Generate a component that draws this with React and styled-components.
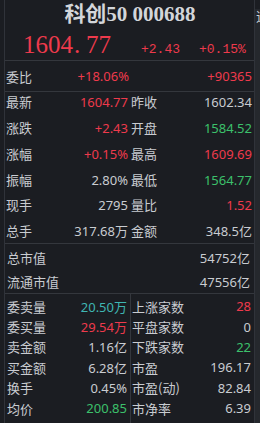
import styled, { createGlobalStyle } from 'styled-components'

const GlobalStyle = createGlobalStyle`
  body {
    margin: 0;
    background: #1b1d22;
    font-family: "Noto Sans", "Noto Sans CJK SC", sans-serif;
  }
`

const RED = '#ee3a4c'
const GREEN = '#3cc06b'
const TEAL = '#3fb6b2'
const TEXT = '#c9ccd1'

const colorOf = (tone) =>
  tone === 'up' ? RED : tone === 'down' ? GREEN : tone === 'teal' ? TEAL : TEXT

const quote = {
  ratio: { label: '委比', pct: '+18.06%', diff: '+90365' },
  rows: [
    ['最新', '1604.77', 'up', '昨收', '1602.34', ''],
    ['涨跌', '+2.43', 'up', '开盘', '1584.52', 'down'],
    ['涨幅', '+0.15%', 'up', '最高', '1609.69', 'up'],
    ['振幅', '2.80%', '', '最低', '1564.77', 'down'],
    ['现手', '2795', '', '量比', '1.52', 'up'],
    ['总手', '317.68万', '', '金额', '348.5亿', ''],
  ],
  caps: [
    ['总市值', '54752亿'],
    ['流通市值', '47556亿'],
  ],
  left: [
    ['委卖量', '20.50万', 'teal'],
    ['委买量', '29.54万', 'up'],
    ['卖金额', '1.16亿', ''],
    ['买金额', '6.28亿', ''],
    ['换手', '0.45%', ''],
    ['均价', '200.85', 'down'],
    ['内盘', '', ''],
  ],
  right: [
    ['上涨家数', '28', 'up'],
    ['平盘家数', '0', ''],
    ['下跌家数', '22', 'down'],
    ['市盈', '196.17', ''],
    ['市盈(动)', '82.84', ''],
    ['市净率', '6.39', ''],
    ['', '', ''],
  ],
}

const App = () => {
  return (
    <>
      <GlobalStyle />
      <Frame>
        <Panel>
          <Header>
            <Title>科创50 000688</Title>
            <PriceRow>
              <BigPrice>
                1604<Dot>.</Dot>77
              </BigPrice>
              <Change>+2.43</Change>
              <Change>+0.15%</Change>
            </PriceRow>
          </Header>

          <RatioRow>
            <Label>{quote.ratio.label}</Label>
            <RatioPct>{quote.ratio.pct}</RatioPct>
            <Value $tone="up">{quote.ratio.diff}</Value>
          </RatioRow>

          <QuoteGrid>
            {quote.rows.map(([l1, v1, t1, l2, v2, t2]) => (
              <QuoteRow key={l1}>
                <Half>
                  <Label>{l1}</Label>
                  <Value $tone={t1}>{v1}</Value>
                </Half>
                <Half>
                  <Label>{l2}</Label>
                  <Value $tone={t2}>{v2}</Value>
                </Half>
              </QuoteRow>
            ))}
          </QuoteGrid>

          <CapSection>
            {quote.caps.map(([l, v]) => (
              <CapRow key={l}>
                <Label>{l}</Label>
                <Value>{v}</Value>
              </CapRow>
            ))}
          </CapSection>

          <Split>
            <Column $left>
              {quote.left.map(([l, v, t]) => (
                <SmallRow key={l}>
                  <Label>{l}</Label>
                  <Value $tone={t}>{v}</Value>
                </SmallRow>
              ))}
            </Column>
            <Column>
              {quote.right.map(([l, v, t], i) => (
                <SmallRow key={i}>
                  <Label>{l}</Label>
                  <Value $tone={t}>{v}</Value>
                </SmallRow>
              ))}
            </Column>
          </Split>
        </Panel>
        <SideStrip>
          <span>道</span>
        </SideStrip>
      </Frame>
    </>
  )
}

const Frame = styled.div`
  display: flex;
  align-items: flex-start;
  width: 260px;
  height: 423px;
  overflow: hidden;
  background: #1b1d22;
`

const Panel = styled.div`
  margin-left: 4px;
  width: 249px;
  min-height: 423px;
  flex-shrink: 0;
  border-left: 1px solid #30333a;
  border-right: 1px solid #30333a;
`

const SideStrip = styled.div`
  flex: 1;
  align-self: stretch;
  margin-top: 9px;
  background: #25282d;
  overflow: hidden;
  span {
    display: block;
    padding-left: 1px;
    font-size: 13px;
    line-height: 13px;
    color: #d0d3d8;
    font-family: "Noto Sans CJK SC", sans-serif;
  }
`

const Header = styled.div`
  height: 60px;
  border-bottom: 1px solid #34373d;
`

const Title = styled.div`
  height: 28px;
  line-height: 28px;
  text-align: center;
  font-family: "Liberation Serif", "Noto Sans CJK SC", serif;
  font-weight: 700;
  font-size: 21px;
  color: #d3d6da;
  padding-left: 1px;
`

const PriceRow = styled.div`
  display: flex;
  align-items: baseline;
  padding-left: 18px;
  margin-top: 4px;
`

const BigPrice = styled.span`
  width: 118px;
  font-family: "Liberation Serif", serif;
  font-size: 25px;
  color: ${RED};
  line-height: 26px;
`

const Dot = styled.span`
  display: inline-block;
  width: 13px;
  padding-left: 1px;
  box-sizing: border-box;
`

const Change = styled.span`
  font-family: "Liberation Mono", monospace;
  font-size: 13px;
  color: ${RED};
  & + & {
    margin-left: 19px;
  }
`

const Label = styled.span`
  font-family: "Noto Sans CJK SC", sans-serif;
  font-size: 13px;
  color: ${TEXT};
  white-space: nowrap;
`

const Value = styled.span`
  margin-left: auto;
  font-size: 13px;
  color: ${({ $tone }) => colorOf($tone)};
  white-space: nowrap;
`

const RatioRow = styled.div`
  height: 30px;
  display: flex;
  align-items: center;
  padding: 0 2px 0 1px;
  border-bottom: 1px solid #34373d;
`

const RatioPct = styled.span`
  width: 97px;
  flex-shrink: 0;
  margin-right: auto;
  text-align: right;
  font-size: 13px;
  color: ${RED};
`

const QuoteGrid = styled.div`
  height: 151px;
  display: grid;
  grid-template-rows: repeat(6, 25.85px);
  border-bottom: 1px solid #34373d;
`

const QuoteRow = styled.div`
  display: grid;
  grid-template-columns: 125px 1fr;
  align-items: start;
  line-height: 20px;
`

const Half = styled.div`
  display: flex;
  padding: 0 2px 0 1px;
`

const CapSection = styled.div`
  height: 48px;
  padding-top: 1px;
  border-bottom: 1px solid #34373d;
`

const CapRow = styled.div`
  height: 24.5px;
  display: flex;
  align-items: center;
  padding: 0 4px 0 2px;
`

const Split = styled.div`
  display: grid;
  grid-template-columns: 126px 1fr;
`

const Column = styled.div`
  display: flex;
  flex-direction: column;
  padding: ${({ $left }) => ($left ? '2px 3px 0 2px' : '2px 3px 0 1px')};
  border-right: ${({ $left }) => ($left ? '1px solid #34373d' : 'none')};
`

const SmallRow = styled.div`
  height: 20.4px;
  display: flex;
  align-items: center;
`

export default App
